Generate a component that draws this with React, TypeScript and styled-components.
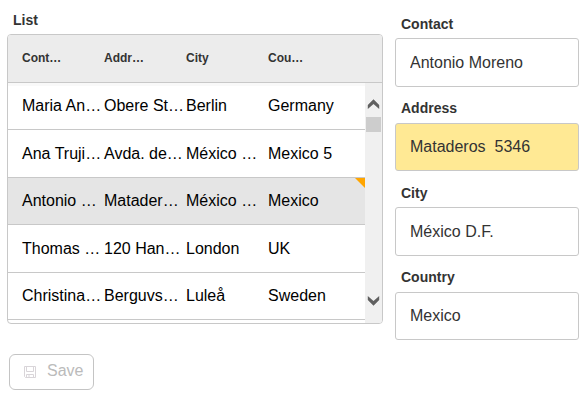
import React from "react";
import styled, { createGlobalStyle } from "styled-components";

const GlobalStyle = createGlobalStyle`
  * { box-sizing: border-box; }
  body {
    margin: 0;
    background: #fff;
    font-family: "Liberation Sans", Arial, Helvetica, sans-serif;
    overflow: hidden;
  }
`;

const Page = styled.main`
  display: flex;
  align-items: flex-start;
  gap: 12px;
  width: 588px;
  height: 404px;
  padding-left: 7px;
`;

const ListColumn = styled.section`
  width: 376px;
  padding-top: 11px;
`;

const Label = styled.div`
  height: 18px;
  padding-left: 6px;
  font-size: 14px;
  font-weight: bold;
  line-height: 18px;
  color: #333;
`;

const Grid = styled.div`
  height: 290px;
  margin-top: 5px;
  border: 1px solid #c8c8c8;
  border-radius: 4px;
  overflow: hidden;
`;

const HeaderRow = styled.div`
  display: grid;
  grid-template-columns: repeat(4, 82px);
  align-items: center;
  height: 48px;
  padding-left: 14px;
  padding-bottom: 1px;
  border-bottom: 1px solid #c8c8c8;
  background: #ececec;
  font-size: 12px;
  font-weight: bold;
  color: #333;
`;

const Viewport = styled.div`
  display: flex;
  height: 240px;
`;

const Rows = styled.div`
  width: 357px;
  border-top: 3px solid #f9f9f9;
`;

const Row = styled.div<{ $height: number; $selected?: boolean; $shift?: number }>`
  position: relative;
  display: grid;
  grid-template-columns: repeat(4, 82px);
  height: ${(p) => p.$height}px;
  padding-left: 14px;
  padding-top: ${(p) => p.$shift}px;
  border-bottom: 1px solid #c8c8c8;
  background: ${(p) => (p.$selected ? "#e5e5e5" : "#fff")};
  font-size: 16px;
  line-height: 20px;
  color: #000;
  white-space: nowrap;
`;

const ChangedMark = styled.span`
  position: absolute;
  top: 0;
  right: 0;
  border-top: 10px solid #ffa500;
  border-left: 10px solid transparent;
`;

const ScrollTrack = styled.div`
  display: flex;
  flex-direction: column;
  width: 17px;
  padding: 16px 1px 17px;
  background: #f0f0f0;
`;

const Chevron = styled.svg`
  display: block;
  width: 15px;
  height: 10px;
  fill: #606060;
`;

const ScrollThumb = styled.div`
  height: 15px;
  margin: 8px 0 auto;
  background: #cdcdcd;
`;

const SaveButton = styled.button`
  display: flex;
  align-items: center;
  width: 85px;
  height: 36px;
  margin: 30px 0 0 2px;
  padding: 0 0 2px 14px;
  border: 1px solid #c4c4c4;
  border-radius: 6px;
  background: #fff;
  color: #bbb;
  font: 16px "Liberation Sans", Arial, sans-serif;
`;

const SaveIcon = styled.svg`
  display: block;
  width: 12px;
  height: 12px;
  margin: 1px 11px 0 0;
`;

const Form = styled.form`
  width: 184px;
  padding-top: 15px;
`;

const Field = styled.div<{ $height: number }>`
  height: ${(p) => p.$height}px;
`;

const Input = styled.input<{ $changed?: boolean; $height: number; $gap: number }>`
  display: block;
  width: 184px;
  height: ${(p) => p.$height}px;
  margin-top: ${(p) => p.$gap}px;
  padding: 0 14px;
  border: 1px solid #c8c8c8;
  border-radius: 3px;
  outline: none;
  background: ${(p) => (p.$changed ? "#ffe994" : "#fff")};
  color: #333;
  font: 16px "Liberation Sans", Arial, sans-serif;
`;

const headers = ["Cont…", "Addr…", "City", "Cou…"];

const rows = [
  { cells: ["Maria An…", "Obere St…", "Berlin", "Germany"], height: 44, shift: 10 },
  { cells: ["Ana Truji…", "Avda. de…", "México …", "Mexico 5"], height: 48, shift: 14 },
  { cells: ["Antonio …", "Matader…", "México …", "Mexico"], height: 47, shift: 13, selected: true },
  { cells: ["Thomas …", "120 Han…", "London", "UK"], height: 48, shift: 14 },
  { cells: ["Christina…", "Berguvs…", "Luleå", "Sweden"], height: 47, shift: 13 },
];

const fields = [
  { label: "Contact", value: "Antonio Moreno", height: 84, gap: 5, box: 49 },
  { label: "Address", value: "Mataderos  5346", height: 85, gap: 6, box: 48, changed: true },
  { label: "City", value: "México D.F.", height: 84, gap: 5, box: 49 },
  { label: "Country", value: "Mexico", height: 85, gap: 6, box: 48 },
];

export default function App() {
  return (
    <>
      <GlobalStyle />
      <Page>
        <ListColumn>
          <Label>List</Label>
          <Grid>
            <HeaderRow>
              {headers.map((h) => (
                <span key={h}>{h}</span>
              ))}
            </HeaderRow>
            <Viewport>
              <Rows>
                {rows.map((r) => (
                  <Row key={r.cells[0]} $height={r.height} $shift={r.shift} $selected={r.selected}>
                    {r.cells.map((c, i) => (
                      <span key={i}>{c}</span>
                    ))}
                    {r.selected && <ChangedMark />}
                  </Row>
                ))}
              </Rows>
              <ScrollTrack>
                <Chevron viewBox="0 0 15 10">
                  <path d="M7.5 0.3 13.2 6v4L7.5 4.9 1.8 10V6z" />
                </Chevron>
                <ScrollThumb />
                <Chevron viewBox="0 0 15 10">
                  <path d="M7.5 9.7 13.2 4V0L7.5 5.1 1.8 0v4z" />
                </Chevron>
              </ScrollTrack>
            </Viewport>
          </Grid>
          <SaveButton type="button" disabled>
            <SaveIcon viewBox="0 0 12 12" fill="none" stroke="#d9d5d9">
              <path d="M.5.5h11v11h-10l-1-1z" />
              <path d="M2.5.5v5h7v-5M2.5 11.5v-3h7v3M5 9v2" />
            </SaveIcon>
            Save
          </SaveButton>
        </ListColumn>
        <Form>
          {fields.map((f) => (
            <Field key={f.label} $height={f.height}>
              <Label>{f.label}</Label>
              <Input
                readOnly
                aria-label={f.label}
                value={f.value}
                $height={f.box}
                $gap={f.gap}
                $changed={f.changed}
              />
            </Field>
          ))}
        </Form>
      </Page>
    </>
  );
}
